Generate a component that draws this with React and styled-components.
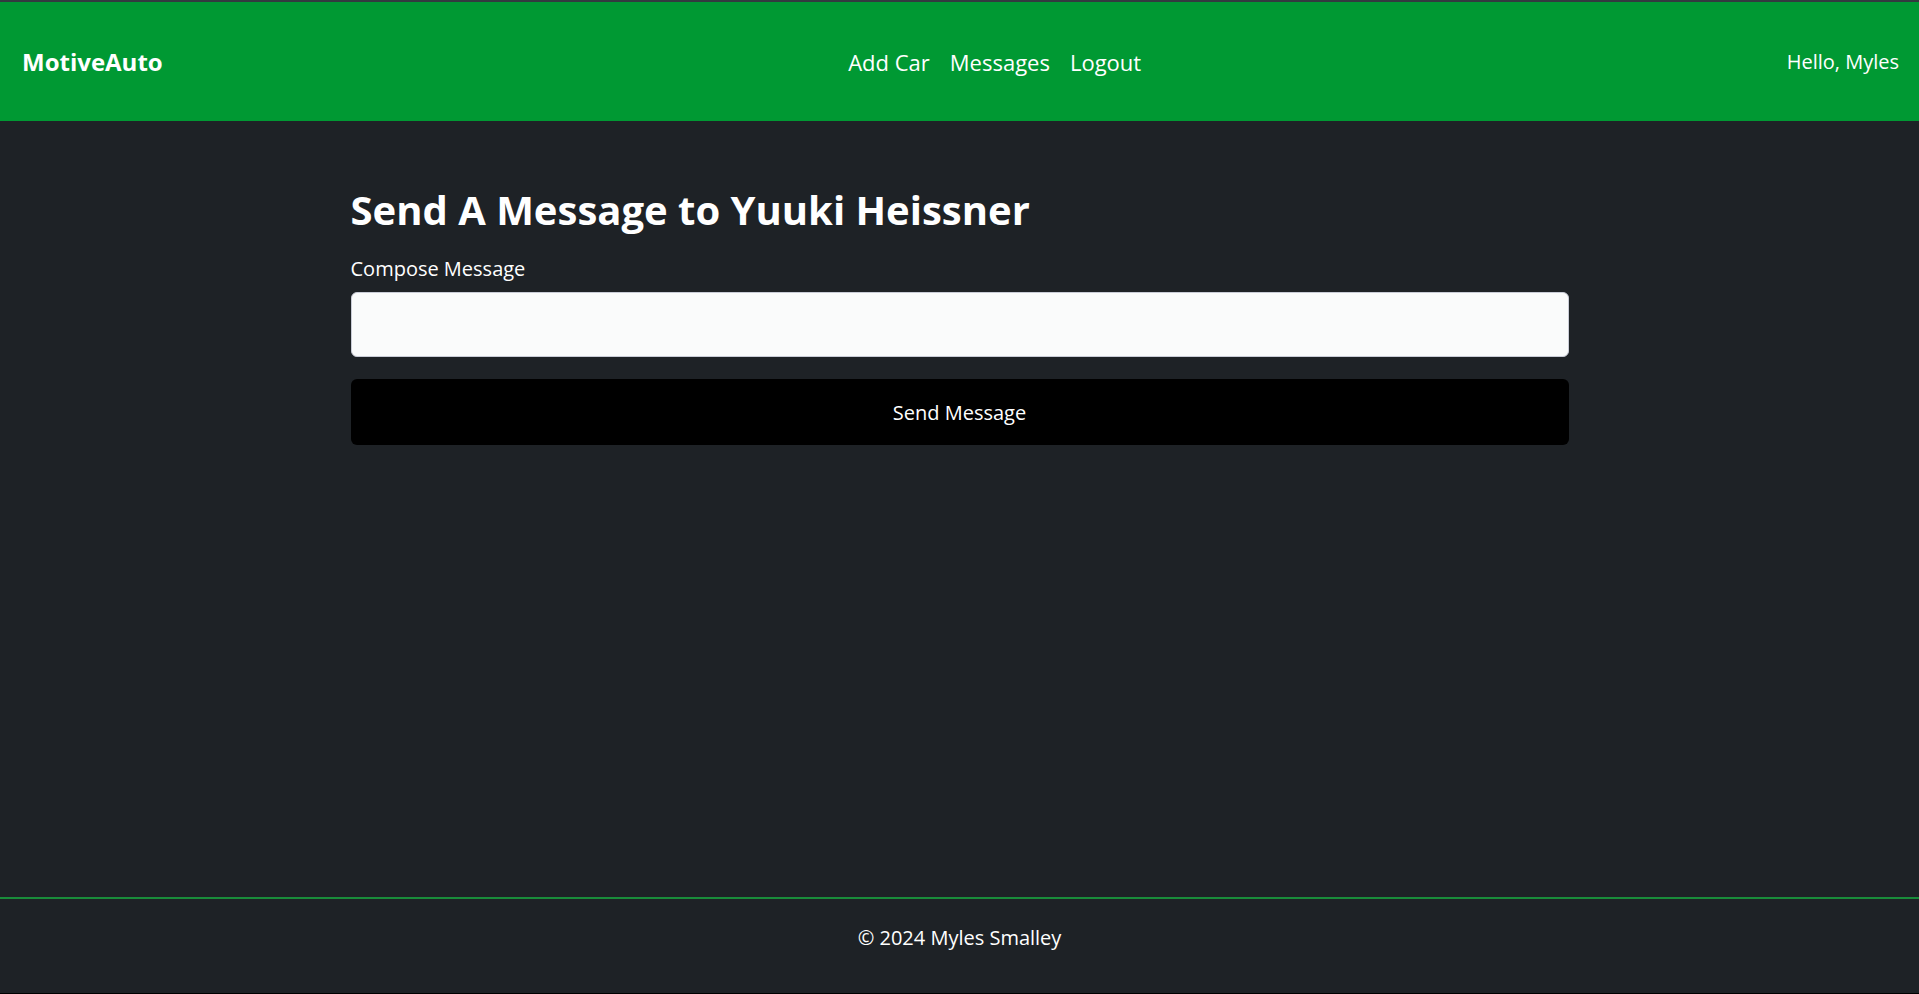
import React from 'react';
import styled, { createGlobalStyle } from 'styled-components';

const GlobalStyle = createGlobalStyle`
  html, body {
    margin: 0;
    padding: 0;
    background: #1e2226;
  }
  body {
    font-family: "Open Sans", "Noto Sans", sans-serif;
    color: #fff;
  }
  * {
    box-sizing: border-box;
  }
`;

const Page = styled.div`
  min-height: 100vh;
  display: flex;
  flex-direction: column;
  border-bottom: 1px solid #000;
`;

const Navbar = styled.nav`
  display: flex;
  align-items: center;
  height: 121px;
  padding: 0 20px 0 22px;
  background: #009933;
  border-top: 2px solid #343a40;
`;

const Brand = styled.a`
  font-size: 24px;
  font-weight: 700;
  color: #fff;
  text-decoration: none;
  margin-right: 40px;
`;

const NavLinks = styled.div`
  display: flex;
  margin: 0 auto;
`;

const NavLink = styled.a`
  padding: 0 10px;
  font-size: 22px;
  color: #fff;
  text-decoration: none;
`;

const Greeting = styled.span`
  font-size: 20px;
  color: #fff;
`;

const Main = styled.main`
  flex: 1;
  padding-top: 65px;
`;

const Container = styled.div`
  width: 1218px;
  margin: 0 auto;
`;

const Title = styled.h1`
  margin: 0 0 21px;
  font-size: 40px;
  font-weight: 700;
  line-height: 1.2;
`;

const Form = styled.form`
  display: flex;
  flex-direction: column;
`;

const Label = styled.label`
  font-size: 20px;
  line-height: 1.4;
  margin-bottom: 9px;
`;

const Input = styled.input`
  height: 65px;
  padding: 0 16px;
  font-size: 20px;
  font-family: inherit;
  background: #fafbfb;
  border: 1px solid #c9ccd6;
  border-radius: 6px;
  outline: none;
  margin-bottom: 22px;
`;

const SubmitButton = styled.button`
  height: 66px;
  border: none;
  border-radius: 6px;
  background: #000;
  color: #fff;
  font-family: inherit;
  font-size: 20px;
  cursor: pointer;
`;

const Footer = styled.footer`
  height: 96px;
  display: flex;
  align-items: center;
  justify-content: center;
  padding-bottom: 18px;
  border-top: 2px solid #198c3a;
  font-size: 20px;
`;

export default function App() {
  return (
    <Page>
      <GlobalStyle />
      <Navbar>
        <Brand href="#">MotiveAuto</Brand>
        <NavLinks>
          <NavLink href="#">Add Car</NavLink>
          <NavLink href="#">Messages</NavLink>
          <NavLink href="#">Logout</NavLink>
        </NavLinks>
        <Greeting>Hello, Myles</Greeting>
      </Navbar>
      <Main>
        <Container>
          <Title>Send A Message to Yuuki Heissner</Title>
          <Form onSubmit={(e) => e.preventDefault()}>
            <Label htmlFor="message">Compose Message</Label>
            <Input id="message" name="message" type="text" />
            <SubmitButton type="submit">Send Message</SubmitButton>
          </Form>
        </Container>
      </Main>
      <Footer>© 2024 Myles Smalley</Footer>
    </Page>
  );
}
